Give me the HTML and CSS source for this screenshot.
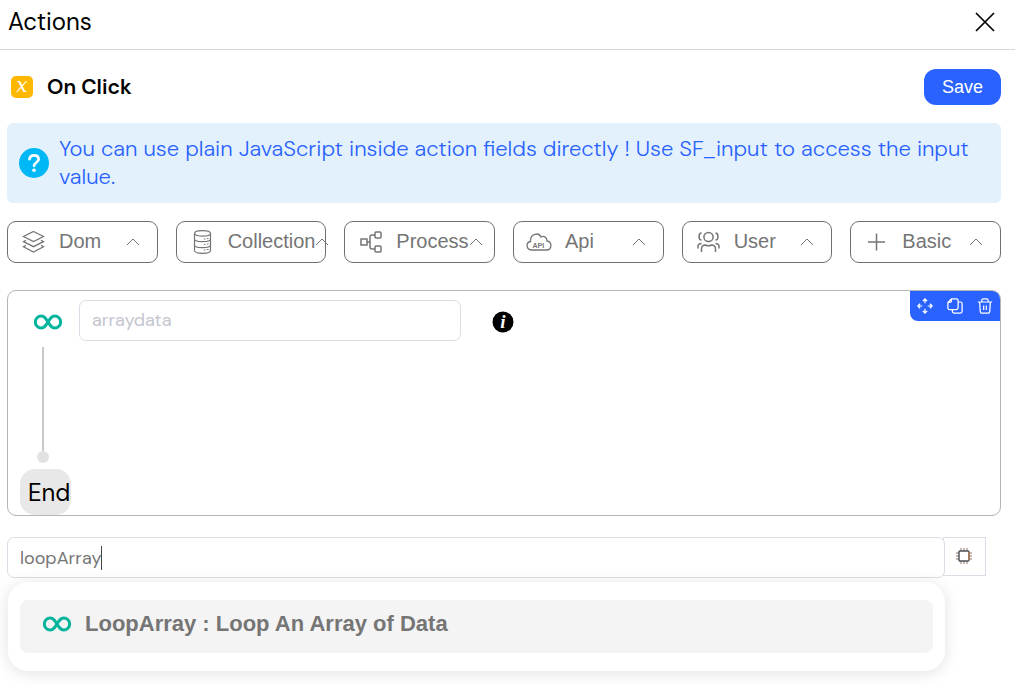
FILE: index.html
```
<!DOCTYPE html>
<html lang="en">
<head>
  <meta charset="UTF-8">
  <meta name="viewport" content="width=device-width, initial-scale=1.0">
  <title>Actions</title>
  <link rel="stylesheet" href="styles.css">
</head>
<body>

  <header class="panel-header">
    <h1>Actions</h1>
    <button type="button" class="icon-btn" aria-label="Close">
      <svg width="20" height="20" viewBox="0 0 20 20" fill="none" stroke="#000" stroke-width="1.7"><path d="M1 1l18 18M19 1L1 19"/></svg>
    </button>
  </header>

  <main class="panel">
    <div class="event-row">
      <svg class="event-icon" width="22" height="22" viewBox="0 0 22 22">
        <rect width="22" height="22" rx="5" fill="#ffb800"/>
        <text x="11" y="16" class="x-text">&#x1D465;</text>
      </svg>
      <h2>On Click</h2>
      <button type="button" class="save-btn">Save</button>
    </div>

    <div class="info-box">
      <svg width="30" height="30" viewBox="0 0 30 30">
        <circle cx="15" cy="15" r="15" fill="#00b8f5"/>
        <path d="M10.500 11.200c.3-2.400 2-3.900 4.600-3.900 2.600 0 4.500 1.500 4.500 3.900 0 3.100-4.500 3.500-4.500 6.600" fill="none" stroke="#fff" stroke-width="2.800" stroke-linecap="round"/>
        <circle cx="15" cy="22.300" r="1.800" fill="#fff"/>
      </svg>
      <p>You can use plain JavaScript inside action fields directly ! Use SF_input to access the input value.</p>
    </div>

    <nav class="categories">
      <button type="button" class="category">
        <svg class="category-icon" viewBox="0 0 26 26"><path stroke-width="1.300" d="M13.500 2.500l10 5-10 5-10-5zM6 11.200L3.500 12.700l10 5 10-5-2.500-1.500M6 16.200L3.500 17.700l10 5.300 10-5.300-2.500-1.500"/></svg>
        <span>Dom</span>
        <svg class="caret" viewBox="0 0 14 8"><path d="M1 7l6-6 6 6"/></svg>
      </button>
      <button type="button" class="category">
        <svg class="category-icon" viewBox="0 0 26 26"><path stroke-width="1.200" d="M5.500 4.500c0-3.800 16-3.800 16 0v17c0 3.800-16 3.800-16 0zM5.500 4.500c0 3.500 16 3.500 16 0M5.500 10c0 3.500 16 3.500 16 0M5.500 16c0 3.500 16 3.500 16 0M15 10h1.500M18 9.500h1.500M15 15.500h1.500M18 15h1.500M15 21h1.500M18 20.500h1.500"/></svg>
        <span>Collection</span>
        <svg class="caret" viewBox="0 0 14 8"><path d="M1 7l6-6 6 6"/></svg>
      </button>
      <button type="button" class="category">
        <svg class="category-icon" viewBox="0 0 26 26"><g stroke-width="1.500"><rect x="4" y="10" width="6" height="6"/><rect x="18" y="3" width="6" height="6" rx="1"/><rect x="18" y="17" width="6" height="6" rx="1"/><path d="M10 13h3M18 6h-3q-2 0-2 2v10q0 2 2 2h3"/></g></svg>
        <span>Process</span>
        <svg class="caret" viewBox="0 0 14 8"><path d="M1 7l6-6 6 6"/></svg>
      </button>
      <button type="button" class="category">
        <svg class="category-icon" viewBox="0 0 26 26"><path stroke-width="1.300" d="M6 21c-6 0-6.500-7.500-1.500-8.500C4 4.500 13 3 15 8c3-1.500 6 .5 6 4 5.500 1 5 9-.5 9z"/><text x="6.500" y="19" class="api-text">API</text></svg>
        <span>Api</span>
        <svg class="caret" viewBox="0 0 14 8"><path d="M1 7l6-6 6 6"/></svg>
      </button>
      <button type="button" class="category">
        <svg class="category-icon" viewBox="0 0 26 26"><g stroke-width="1.500"><circle cx="13.500" cy="8" r="4.600"/><path d="M6.500 23v-3q0-4 4-4 3 1.500 6 0 4 0 4 4v3M6.500 4Q4 4 4 7.500t2.500 3.500M20.500 4q2.500 0 2.500 3.500t-2.500 3.500M3 19.500v-2q0-3 3.500-3M24 19.500v-2q0-3-3.500-3"/></g></svg>
        <span>User</span>
        <svg class="caret" viewBox="0 0 14 8"><path d="M1 7l6-6 6 6"/></svg>
      </button>
      <button type="button" class="category">
        <svg class="category-icon" viewBox="0 0 26 26"><path stroke-width="1.500" d="M13.500 4.500v17M5 13h17"/></svg>
        <span>Basic</span>
        <svg class="caret" viewBox="0 0 14 8"><path d="M1 7l6-6 6 6"/></svg>
      </button>
    </nav>

    <section class="action-card">
      <div class="action-row">
        <svg class="loop-icon" viewBox="0 0 30 18"><path d="M15 9C12.800 5.500 11.300 3 8.300 3a6 6 0 0 0 0 12c3 0 4.500-2.500 6.700-6s3.700-6 6.700-6a6 6 0 0 1 0 12c-3 0-4.500-2.500-6.700-6z"/></svg>
        <input type="text" class="text-input array-input" placeholder="arraydata" aria-label="Array data">
        <svg width="22" height="22" viewBox="0 0 22 22">
          <circle cx="11" cy="11" r="10.500"/>
          <text x="11" y="17" class="i-text">i</text>
        </svg>
      </div>
      <div class="flow-line"></div>
      <div class="flow-dot"></div>
      <div class="end-tag">End</div>

      <div class="card-tools">
        <button type="button" aria-label="Move">
          <svg viewBox="0 0 18 18"><path d="M9 1v5M9 12v5M1 9h5M12 9h5M6.500 3.500L9 1l2.500 2.500M6.500 14.500L9 17l2.500-2.500M3.500 6.500L1 9l2.500 2.500M14.500 6.500L17 9l-2.500 2.500"/></svg>
        </button>
        <button type="button" aria-label="Copy">
          <svg viewBox="0 0 18 18"><path d="M5 1h5.500q2 0 2 2v8q0 2-2 2H3q-2 0-2-2V5zM5 1v2q0 2-2 2H1M12.500 4.500H15q2 0 2 2V15q0 2-2 2H8q-2 0-2-2v-2"/></svg>
        </button>
        <button type="button" aria-label="Delete">
          <svg viewBox="0 0 18 18"><path d="M1 4.500h16M5.500 4.500V2.500Q5.500 1 7 1h4q1.500 0 1.500 1.500v2M3 4.500l.7 11Q3.800 17 5.300 17h7.400q1.500 0 1.600-1.500l.7-11M7.500 8.500v5M10.500 8.500v5"/></svg>
        </button>
      </div>
    </section>

    <div class="search-row">
      <div class="search-field">
        <input type="text" class="text-input" value="loopArray" aria-label="Search action">
        <span class="cursor"></span>
      </div>
      <button type="button" class="chip-btn" aria-label="Variables">
        <svg width="16" height="16" viewBox="0 0 16 16" fill="none">
          <path d="M5 0v3M8 0v3M11 0v3M5 13v3M8 13v3M11 13v3M0 5h3M0 8h3M0 11h3M13 5h3M13 8h3M13 11h3" stroke="#8a7768"/>
          <rect x="3" y="3" width="10" height="10" rx="1" stroke="#4f4f55" stroke-width="1.400"/>
          <path d="M13 4v8" stroke="#c77a3c"/>
        </svg>
      </button>
    </div>

    <div class="suggestions">
      <button type="button" class="suggestion">
        <svg class="loop-icon" viewBox="0 0 30 18"><path d="M15 9C12.800 5.500 11.300 3 8.300 3a6 6 0 0 0 0 12c3 0 4.500-2.500 6.700-6s3.700-6 6.700-6a6 6 0 0 1 0 12c-3 0-4.500-2.500-6.700-6z"/></svg>
        <span>LoopArray : Loop An Array of Data</span>
      </button>
    </div>
  </main>

</body>
</html>
```
FILE: styles.css
```
* {
  box-sizing: border-box;
}

body {
  margin: 0;
  min-height: 100vh;
  font-family: "DM Sans", Inter, sans-serif;
  background-color: #fff;
  color: #000;
}

h1, h2, p {
  margin: 0;
}

button {
  font-family: "Liberation Sans", Arial, sans-serif;
  cursor: pointer;
}

.panel-header {
  display: flex;
  align-items: center;
  justify-content: space-between;
  height: 50px;
  padding: 0 20px 5px 8px;
  border-bottom: 1px solid #d9d9d9;
}

.panel-header h1 {
  font-size: 24px;
  font-weight: 400;
  line-height: 30px;
}

.icon-btn {
  display: flex;
  padding: 0;
  border: none;
  background: none;
}

.panel {
  padding: 19px 14px 16px 7px;
}

.event-row {
  display: flex;
  align-items: center;
  gap: 14px;
  padding-left: 4px;
}

.event-row h2 {
  flex: 1;
  font-size: 21px;
  font-weight: 600;
}

.event-icon {
  overflow: visible;
}

.x-text {
  font-family: "Liberation Serif", "DejaVu Serif", "DejaVu Sans", serif;
  font-size: 20px;
  text-anchor: middle;
  fill: #fff;
}

.i-text {
  font-family: "Liberation Serif", serif;
  font-size: 19px;
  font-style: italic;
  font-weight: bold;
  text-anchor: middle;
  fill: #fff;
}

.save-btn {
  height: 36px;
  padding: 0 18px;
  border: none;
  border-radius: 12px;
  background-color: #2962ff;
  color: #fff;
  font-size: 18px;
}

.info-box {
  display: flex;
  align-items: center;
  gap: 10px;
  margin-top: 18px;
  padding: 12px;
  border-radius: 6px;
  background-color: #e3f1fd;
  color: #2962ff;
  font-size: 22px;
  font-weight: 300;
  line-height: 28px;
}

.info-box svg {
  flex: none;
}

.categories {
  display: grid;
  grid-template-columns: repeat(6, minmax(0, 1fr));
  gap: 18px;
  margin-top: 18px;
}

.category {
  display: flex;
  align-items: center;
  height: 42px;
  padding: 0 17px 0 12px;
  border: 1px solid #707070;
  border-radius: 9px;
  background-color: #fff;
  color: #757575;
  font-size: 20px;
}

.category span {
  flex: 1 0 auto;
  margin: 0 0 2px 13px;
  text-align: left;
}

.category svg {
  flex: none;
  fill: none;
  stroke: #757575;
}

.category-icon {
  width: 26px;
  height: 26px;
}

.caret {
  width: 14px;
  height: 8px;
}

.category .api-text {
  font-size: 7px;
  font-weight: bold;
  fill: #757575;
  stroke: none;
}

.action-card {
  position: relative;
  margin-top: 27px;
  padding: 9px 12px 0;
  border: 1px solid #b5b5b5;
  border-radius: 9px;
}

.action-row {
  display: flex;
  align-items: center;
  padding-left: 13px;
}

.action-row svg {
  margin-top: 2px;
}

.loop-icon {
  flex: none;
  width: 30px;
  height: 18px;
  fill: none;
  stroke: #00b59c;
  stroke-width: 3;
}

.text-input {
  height: 41px;
  padding: 0 12px 2px;
  border: 1px solid #dcdce6;
  border-radius: 7px;
  outline: none;
  background-color: #fff;
  color: #757575;
  font-family: inherit;
  font-size: 18px;
}

.text-input::placeholder {
  color: #c3c5cf;
}

.array-input {
  width: 382px;
  margin: 0 31px 0 16px;
}

.flow-line {
  width: 2px;
  height: 104px;
  margin: 6px 0 0 22px;
  background-color: #c8c8c8;
}

.flow-dot {
  width: 12px;
  height: 12px;
  margin-left: 17px;
  border-radius: 50%;
  background-color: #e2e2e2;
}

.end-tag {
  width: 51px;
  height: 46px;
  margin-top: 6px;
  padding-left: 8px;
  border-radius: 15px;
  background-color: #e8e8e8;
  font-size: 24px;
  line-height: 48px;
}

.card-tools {
  position: absolute;
  top: 0;
  right: 0;
  display: flex;
  border-radius: 0 8px 0 8px;
  background-color: #2962ff;
}

.card-tools button {
  display: flex;
  padding: 7px;
  border: none;
  background: none;
}

.card-tools svg {
  width: 16px;
  height: 16px;
  fill: none;
  stroke: #fff;
  stroke-width: 1.4;
}

.search-row {
  display: flex;
  align-items: flex-start;
  margin-top: 21px;
  padding-right: 15px;
}

.search-field {
  position: relative;
  z-index: 1;
  display: flex;
  flex: 1;
}

.search-field .text-input {
  width: 100%;
  padding: 0 12px;
  caret-color: transparent;
}

/* text cursor */
.cursor {
  position: absolute;
  top: 9px;
  left: 94px;
  width: 1px;
  height: 24px;
  background-color: #444;
}

.chip-btn {
  display: flex;
  align-items: center;
  justify-content: center;
  width: 43px;
  height: 39px;
  margin-left: -2px;
  padding: 0 1px 2px 0;
  border: 1px solid #dcdce6;
  background-color: #fff;
}

.suggestions {
  position: relative;
  z-index: 2;
  margin: 4px 56px 0 1px;
  padding: 18px 12px;
  border-radius: 20px;
  background-color: #fff;
  box-shadow: 0 2px 16px rgba(0, 0, 0, 0.12);
}

.suggestion {
  display: flex;
  align-items: center;
  gap: 13px;
  width: 100%;
  height: 53px;
  padding: 0 22px 5px;
  border: none;
  border-radius: 8px;
  background-color: #f4f4f4;
  color: #757575;
  font-size: 22px;
  font-weight: bold;
}
```
